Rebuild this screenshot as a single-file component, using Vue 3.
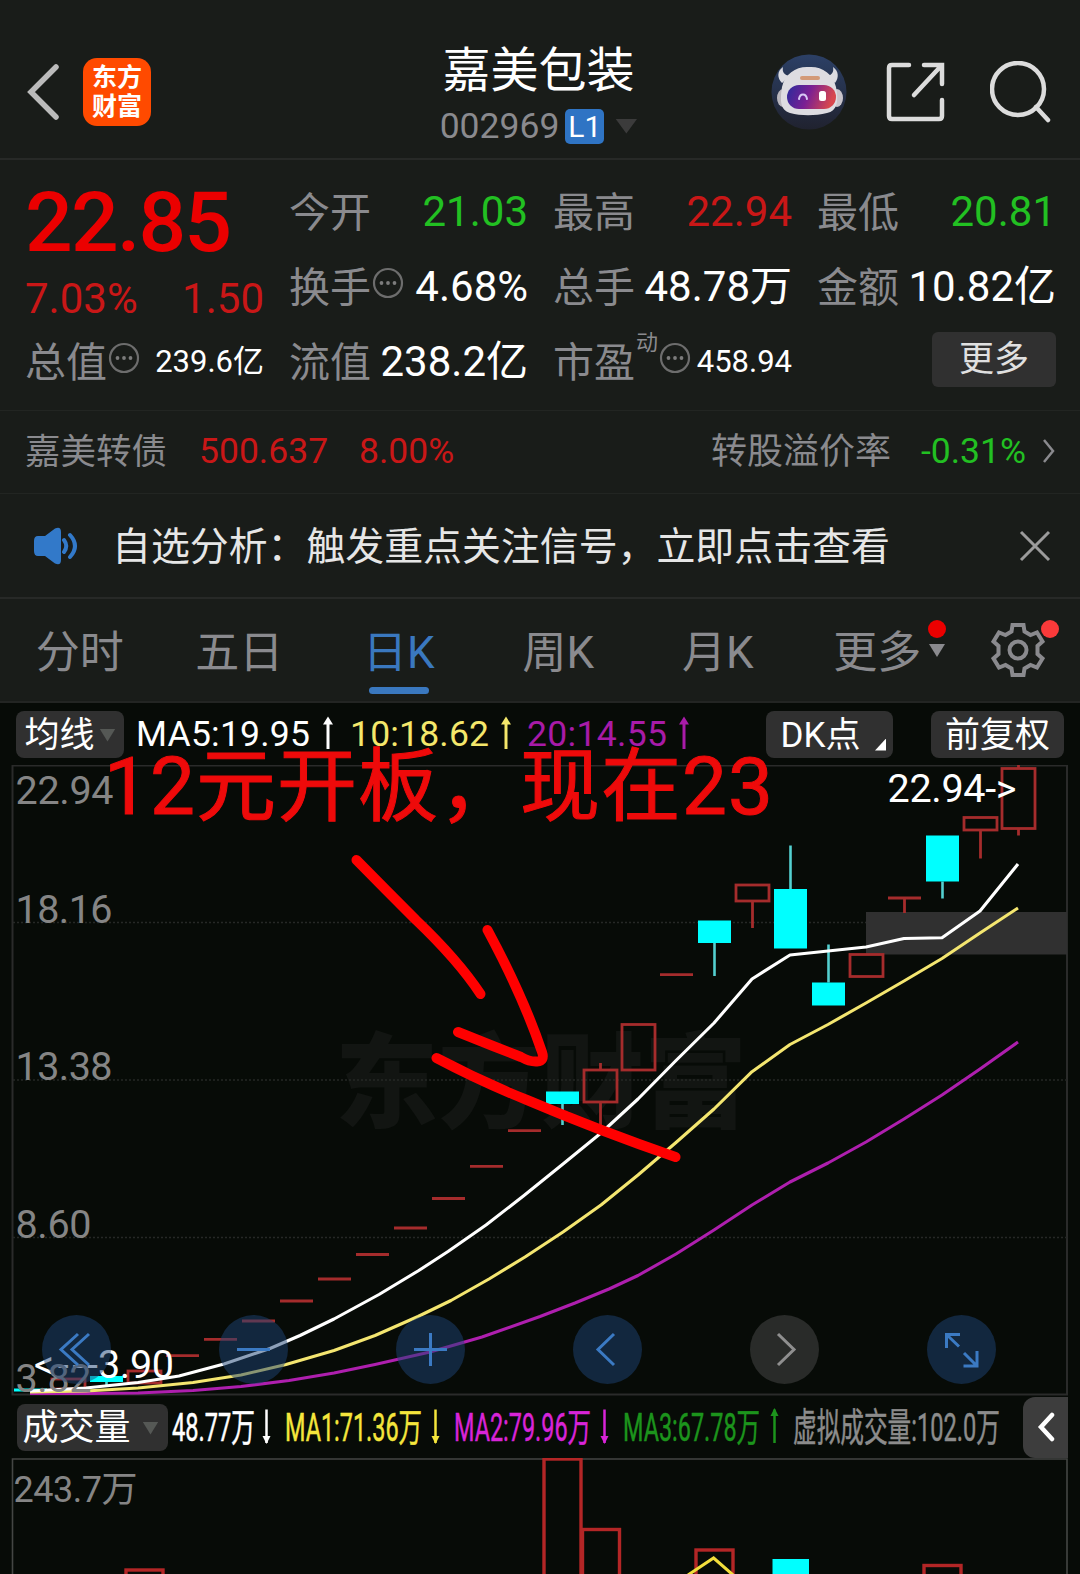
<template>
  <div class="page">
    <header class="header">
      <div class="header-left">
        <svg class="icon-back" viewBox="0 0 36 60">
          <path d="M31 5 L6 30 L31 55" />
        </svg>
        <div class="brand"><span>东方</span><span>财富</span></div>
      </div>
      <div class="header-title">
        <div class="stock-name">嘉美包装</div>
        <div class="stock-code">
          <span class="code">002969</span>
          <span class="level">L1</span>
          <i class="tri tri-dark"></i>
        </div>
      </div>
      <div class="header-right">
        <svg class="icon-robot" viewBox="0 0 76 76">
          <defs>
            <linearGradient id="robotBg" x1="0" y1="0" x2="0" y2="1">
              <stop offset="0" stop-color="#2c4066" />
              <stop offset="1" stop-color="#20222f" />
            </linearGradient>
            <linearGradient id="visor" x1="0" y1="0" x2="1" y2="0.2">
              <stop offset="0" stop-color="#2a2c9c" />
              <stop offset="0.5" stop-color="#7a1f93" />
              <stop offset="1" stop-color="#d8474e" />
            </linearGradient>
          </defs>
          <circle cx="38" cy="38" r="37.5" fill="url(#robotBg)" />
          <path d="M12 13 C6 17 6 24 11 29 L19 22 C13 21 11 18 12 13 Z" fill="#dcdce2" />
          <path d="M62 13 C68 17 68 24 64 29 L56 22 C61 21 63 18 62 13 Z" fill="#dcdce2" />
          <ellipse cx="12" cy="44" rx="6" ry="9" fill="#b9b6bd" />
          <ellipse cx="66" cy="44" rx="6" ry="9" fill="#c9c4cb" />
          <path d="M38 13 C50 12 62 19 65 33 C68 48 66 57 56 59 C44 62 30 62 19 59 C9 56 9 46 11 33 C14 19 26 12 38 13 Z" fill="#dddce1" />
          <rect x="29" y="22" width="20" height="4" rx="2" fill="#d39a78" />
          <rect x="16" y="31" width="49" height="24" rx="12" fill="url(#visor)" />
          <path d="M28 45 C29 39 35 39 36 45" fill="none" stroke="#d9c8f5" stroke-width="2" stroke-linecap="round" />
          <rect x="48" y="37" width="7" height="10" rx="2.5" fill="#fff" />
        </svg>
        <svg class="icon-share" viewBox="0 0 60 60">
          <path d="M23 3 H6 Q3 3 3 6 V54 Q3 57 6 57 H53 Q56 57 56 54 V38" />
          <path d="M38 3 H56 V22 M55 4 L28 33" />
        </svg>
        <svg class="icon-search" viewBox="0 0 62 62">
          <circle cx="28" cy="28" r="26" />
          <path d="M46 46 L58 59" />
        </svg>
      </div>
    </header>

    <section class="quote">
      <div class="price-box">
        <div class="price">22.85</div>
        <div class="change"><span>7.03%</span><span>1.50</span></div>
      </div>
      <div v-for="item in stats" :key="item.label" class="stat">
        <span class="stat-label">{{ item.label }}</span>
        <sup v-if="item.sup" class="stat-sup">{{ item.sup }}</sup>
        <svg v-if="item.tip" class="icon-tip" viewBox="0 0 32 32">
          <circle cx="16" cy="16" r="14" />
          <circle v-for="x in [9.5, 16, 22.5]" :key="x" class="dot" :cx="x" cy="16" r="1.9" />
        </svg>
        <span class="stat-value" :class="[item.color, { small: item.small }]">{{ item.value }}</span>
      </div>
      <div class="more-cell"><button class="more-btn">更多</button></div>
    </section>

    <section class="bond">
      <span class="bond-name">嘉美转债</span>
      <span class="bond-price">500.637</span>
      <span class="bond-rate">8.00%</span>
      <span class="bond-premium">转股溢价率</span>
      <span class="bond-premium-value">-0.31%</span>
      <svg class="icon-next" viewBox="0 0 14 26"><path d="M2 2 L11 13 L2 24" /></svg>
    </section>

    <section class="notice">
      <svg class="icon-speaker" viewBox="0 0 46 38">
        <path class="body" d="M5 9 H12 L22 1.5 Q28 -1 28 5 V33 Q28 39 22 36.5 L12 29 H5 Q1 29 1 24 V14 Q1 9 5 9 Z" />
        <path class="wave" d="M31 13 Q35.5 19 31 25 M37 8 Q47 19 37 30" />
      </svg>
      <span class="notice-text">自选分析：触发重点关注信号，立即点击查看</span>
      <svg class="icon-close" viewBox="0 0 32 32"><path d="M2 2 L30 30 M30 2 L2 30" /></svg>
    </section>

    <nav class="tabs">
      <div v-for="tab in tabs" :key="tab" class="tab" :class="{ active: tab === activeTab }" @click="activeTab = tab">
        {{ tab }}
      </div>
      <div class="tab">
        更多
        <i class="red-dot"></i>
        <i class="tri tri-tab"></i>
      </div>
      <div class="tab-setting">
        <svg viewBox="0 0 54 54">
          <path d="M21.5 2 H32.5 L33.5 8.5 L39.5 12 L46 9.5 L51.5 18.5 L46.5 23 V31 L51.5 35.5 L46 44.5 L39.5 42 L33.5 45.5 L32.5 52 H21.5 L20.5 45.5 L14.5 42 L8 44.5 L2.5 35.5 L7.5 31 V23 L2.5 18.5 L8 9.5 L14.5 12 L20.5 8.5 Z" />
          <circle cx="27" cy="27" r="8.5" />
        </svg>
        <i class="red-dot light"></i>
      </div>
    </nav>

    <section class="chart">
      <div class="ma-bar">
        <button class="chip chip-ma">均线<i class="tri tri-chip"></i></button>
        <svg class="ma-values" viewBox="130 703 570 62">
          <g v-for="ma in maList" :key="ma.text" :fill="ma.color" :stroke="ma.color">
            <text :x="ma.x" y="746" :textLength="ma.width" stroke="none">{{ ma.text }}</text>
            <path :d="`M${ma.arrow} 749 V722`" stroke-width="3" />
            <path :d="`M${ma.arrow} 716.5 l5 8 h-10 Z`" stroke="none" />
          </g>
        </svg>
        <button class="chip chip-dk">DK点<i class="corner"></i></button>
        <button class="chip chip-fq">前复权</button>
      </div>

      <div class="kline">
        <svg class="kline-svg" viewBox="0 765 1080 631">
          <text class="watermark" x="335" y="1120" textLength="412">东方财富</text>
          <g class="frame">
            <path d="M12.5 1394.5 V765.5 H1067 V1394.5 Z" />
            <path v-for="y in [922.5, 1080, 1237.5]" :key="y" class="dotted" :d="`M13 ${y} H1067`" />
          </g>
          <rect x="866" y="912" width="201" height="42.5" fill="#303030" />
          <g v-for="c in candles" :key="c.x" :class="c.up ? 'up' : 'down'">
            <path v-if="c.high < c.top" :d="`M${c.x} ${c.high} V${c.top}`" />
            <path v-if="c.low > c.bottom" :d="`M${c.x} ${c.bottom} V${c.low}`" />
            <path v-if="c.top === c.bottom" :d="`M${c.x - 16.5} ${c.top} h33`" />
            <rect v-else :x="c.x - 16.5" :y="c.top" width="33" :height="c.bottom - c.top" />
          </g>
          <polyline v-for="line in maLines" :key="line.color" class="ma-line" :points="line.points" :stroke="line.color" />
          <g class="mark">
            <text x="887.5" y="801.5" textLength="129">22.94-&gt;</text>
            <text x="34" y="1378" textLength="64">&lt;---</text>
            <text x="98" y="1378" textLength="76">3.90</text>
          </g>
          <g class="axis">
            <text v-for="a in axis" :key="a.text" x="15.5" :y="a.y" :textLength="a.width">{{ a.text }}</text>
          </g>
        </svg>
        <div class="tools">
          <span v-for="tool in tools" :key="tool.name" class="tool" :class="{ disabled: tool.disabled }">
            <svg viewBox="0 0 69 69"><path :d="tool.path" /></svg>
          </span>
        </div>
      </div>

      <div class="vol-bar">
        <button class="chip chip-vol">成交量<i class="tri tri-chip"></i></button>
        <svg class="vol-values" viewBox="168 1396 840 62">
          <g v-for="v in volList" :key="v.text" :fill="v.color" :stroke="v.color">
            <text :x="v.x" y="1440.5" :textLength="v.width" lengthAdjust="spacingAndGlyphs" stroke-width="0.5">{{ v.text }}</text>
            <template v-if="v.arrow">
              <path :d="`M${v.arrow} 1409.5 V1443`" stroke-width="2.5" />
              <path v-if="v.rise" :d="`M${v.arrow} 1408 l4 8 h-8 Z`" stroke="none" />
              <path v-else :d="`M${v.arrow} 1444 l4 -8 h-8 Z`" stroke="none" />
            </template>
          </g>
        </svg>
        <div class="drawer">
          <svg viewBox="0 0 18 30"><path d="M15 3 L4 15 L15 27" /></svg>
        </div>
      </div>

      <svg class="volume-svg" viewBox="0 1458 1080 116">
        <path class="vol-frame" d="M12.5 1580 V1459 H1067 V1580" />
        <text x="13.5" y="1501.5" textLength="124">243.7万</text>
        <g v-for="b in volumes" :key="b.x" :class="b.up ? 'up' : 'down'">
          <rect :x="b.x" :y="b.y" :width="b.w" height="140" />
        </g>
        <polyline points="688,1575 713.6,1558 733,1575" fill="none" stroke="#f2de3c" stroke-width="3" />
      </svg>

      <svg class="annotation" viewBox="0 703 1080 871">
        <text x="104" y="813.5" textLength="669">12元开板，现在23</text>
        <path d="M356.5 860 Q385 889 416 920 Q458 960 480.5 994" />
        <path d="M487.5 930 Q523 996 542 1052 Q545 1061 537 1061.5 Q530 1062 521 1057 L493 1046 L458 1032" />
        <path d="M436.5 1058 Q480 1081 527 1100 Q600 1131 675.5 1157" />
      </svg>
    </section>
  </div>
</template>

<script setup>
import { ref } from 'vue';

const activeTab = ref('日K');
const tabs = ['分时', '五日', '日K', '周K', '月K'];

const stats = [
  { label: '今开', value: '21.03', color: 'green' },
  { label: '最高', value: '22.94', color: 'red' },
  { label: '最低', value: '20.81', color: 'green' },
  { label: '换手', value: '4.68%', tip: true },
  { label: '总手', value: '48.78万' },
  { label: '金额', value: '10.82亿' },
  { label: '总值', value: '239.6亿', tip: true, small: true },
  { label: '流值', value: '238.2亿' },
  { label: '市盈', value: '458.94', sup: '动', tip: true, small: true }
];

const maList = [
  { text: 'MA5:19.95', x: 136, width: 174, arrow: 328, color: '#ffffff' },
  { text: '10:18.62', x: 350, width: 139, arrow: 506, color: '#f4e76b' },
  { text: '20:14.55', x: 527, width: 140, arrow: 684, color: '#a81ba8' }
];

const axis = [
  { text: '22.94', y: 803.5, width: 98 },
  { text: '18.16', y: 922.5, width: 97 },
  { text: '13.38', y: 1080, width: 97 },
  { text: '8.60', y: 1237.5, width: 76 },
  { text: '3.82', y: 1392, width: 76 }
];

const flat = (x, y, low = y) => ({ x, top: y, bottom: y, high: y, low, up: true });
const up = (x, top, bottom, high = top, low = bottom) => ({ x, top, bottom, high, low, up: true });
const down = (x, top, bottom, high = top, low = bottom) => ({ x, top, bottom, high, low, up: false });

const candles = [
  down(30.5, 1388.5, 1391.5),
  up(68.5, 1379, 1389),
  down(106.5, 1376, 1382, 1376, 1385),
  up(144.5, 1371, 1383),
  flat(182.5, 1355.7),
  flat(220.5, 1339.3),
  flat(258.5, 1321),
  flat(296.5, 1301),
  flat(334.5, 1279),
  flat(372.5, 1254.5),
  flat(410.5, 1228),
  flat(448.5, 1198.5),
  flat(486.5, 1166.3),
  flat(524.5, 1130.7),
  down(562.5, 1091.5, 1104, 1091.5, 1125),
  up(600.5, 1070, 1102, 1063, 1128),
  up(638.5, 1024.5, 1070),
  flat(676.5, 974.7),
  down(714.5, 920.5, 943, 920.5, 976),
  up(752.5, 885, 901, 885, 928),
  down(790.5, 889, 948.5, 845.5, 948.5),
  down(828.5, 982.5, 1005.5, 944.5, 1005.5),
  up(866.5, 954.5, 976.5),
  flat(904.5, 898, 913),
  down(942.5, 835.5, 881.5, 835.5, 898.5),
  up(980.5, 817.5, 830, 817.5, 858.5),
  up(1018.5, 768.5, 828.5, 765, 835.5)
];

const maLines = [
  {
    color: '#ae1fae',
    points: '30,1393.5 86,1393.5 138,1393 193,1390.5 241,1386.5 289,1380.5 334,1373 375,1364.5 430,1352 482,1337 540,1316.5 575,1303 609,1289 638,1275.5 676,1254 714,1230 752,1205 790,1182 828,1163 866,1142 904,1119 942,1095 980,1069 1018,1042'
  },
  {
    color: '#f4e670',
    points: '30,1392 86,1391 138,1388 193,1382.5 241,1375 286,1364.5 334,1350.5 375,1335.5 418,1316.5 451,1300.5 489,1279 525,1257 563,1232 601,1205 638,1175 676,1142.5 714,1109 752,1071.7 790,1044.5 828,1024.5 866,1003 904,981 942,958.5 980,933 1018,908'
  },
  {
    color: '#ffffff',
    points: '30,1391 86,1388 138,1382.5 179,1376 224,1364 270,1348.5 300,1335.5 334,1319 379,1294.5 418,1271 448,1251.5 486,1225 524,1195.5 563,1164 601,1133 638,1099 676,1060.5 714,1023 752,979 790,955 828,951 866,947 904,938.5 942,937.7 980,911 1018,864'
  }
];

const tools = [
  { name: 'first', path: 'M36 19 L19 34.5 L36 50 M47 19 L30 34.5 L47 50' },
  { name: 'minus', path: 'M18 34.5 H51' },
  { name: 'plus', path: 'M18 34.5 H51 M34.5 18 V51' },
  { name: 'prev', path: 'M41 19 L25 34.5 L41 50' },
  { name: 'next', path: 'M28 19 L44 34.5 L28 50', disabled: true },
  { name: 'full', path: 'M33 19.5 H19.5 V33 M20 20 L32 31.5 M36.5 51 H50 V36 M50 51 L37 38' }
];

const volList = [
  { text: '48.77万', x: 172, width: 83, arrow: 266.5, color: '#ffffff' },
  { text: 'MA1:71.36万', x: 285, width: 137, arrow: 435.5, color: '#f5e63c' },
  { text: 'MA2:79.96万', x: 454, width: 137, arrow: 604.5, color: '#d824d8' },
  { text: 'MA3:67.78万', x: 623, width: 137, arrow: 774.5, color: '#1c941c', rise: true },
  { text: '虚拟成交量:102.0万', x: 793, width: 207, color: '#8c8c8c' }
];

const volumes = [
  { x: 126, y: 1570, w: 37, up: true },
  { x: 544, y: 1459, w: 37, up: true },
  { x: 582.5, y: 1529.5, w: 37, up: true },
  { x: 696, y: 1550, w: 37, up: true },
  { x: 772.5, y: 1559, w: 36.5, up: false },
  { x: 924, y: 1565.5, w: 37, up: true }
];
</script>

<style>
body {
  background: #191c19;
}
</style>

<style scoped>
.page {
  width: 1080px;
  height: 1574px;
  overflow: hidden;
  background: #191c19;
  color: #8a8a8e;
  font-family: Roboto, "Noto Sans CJK SC", sans-serif;
  display: flex;
  flex-direction: column;
}
.page * {
  box-sizing: border-box;
}
svg {
  display: block;
  fill: none;
}
button {
  border: 0;
  padding: 0;
  font-family: inherit;
  color: #fff;
  background: #303030;
}
.tri {
  display: block;
  width: 16px;
  height: 13px;
  background: #555855;
  clip-path: polygon(0 0, 100% 0, 50% 100%);
}

/* header */
.header {
  height: 160px;
  padding: 26px 28px 0 25px;
  border-bottom: 2px solid #272927;
  display: grid;
  grid-template-columns: 1fr auto 1fr;
  align-items: center;
}
.header-left,
.header-right {
  display: flex;
  align-items: center;
}
.header-right {
  justify-content: flex-end;
}
.icon-back {
  width: 36px;
  height: 60px;
  stroke: #bbb;
  stroke-width: 5.5;
  stroke-linecap: round;
}
.brand {
  width: 68px;
  height: 68px;
  margin-left: 22px;
  border-radius: 14px;
  background: #ff4a00;
  color: #fff;
  font-size: 25px;
  font-weight: 700;
  line-height: 29px;
  display: flex;
  flex-direction: column;
  align-items: center;
  justify-content: center;
}
.header-title {
  padding-top: 8px;
}
.stock-name {
  color: #fff;
  font-size: 48px;
  line-height: 56px;
  text-align: center;
}
.stock-code {
  display: flex;
  align-items: center;
  height: 50px;
  padding-top: 4px;
}
.code {
  font-size: 35.5px;
}
.level {
  width: 39px;
  height: 35px;
  margin-left: 6px;
  border-radius: 5px;
  background: #2f74c4;
  color: #fff;
  font-size: 30px;
  line-height: 35px;
  text-align: center;
}
.tri-dark {
  width: 22px;
  height: 15px;
  margin-left: 11px;
  background: #3b3b3b;
}
.icon-robot {
  width: 76px;
  height: 76px;
}
.icon-share {
  width: 60px;
  height: 60px;
  margin-left: 39px;
  stroke: #dcdcdc;
  stroke-width: 4.5;
  stroke-linecap: round;
}
.icon-search {
  width: 62px;
  height: 62px;
  margin-left: 44px;
  stroke: #dcdcdc;
  stroke-width: 4.5;
  stroke-linecap: round;
}

/* quote */
.quote {
  height: 251px;
  padding: 14px 24px 0 25px;
  border-bottom: 1px solid #222522;
  display: grid;
  grid-template-columns: repeat(4, 239px);
  grid-template-rows: repeat(3, 75px);
  column-gap: 25px;
}
.price-box {
  grid-row: span 2;
}
.price {
  height: 100px;
  color: #eb0000;
  font-size: 84px;
  font-weight: 500;
  line-height: 98px;
  letter-spacing: -1.8px;
}
.change {
  display: flex;
  justify-content: space-between;
  color: #c91717;
  font-size: 42px;
  line-height: 50px;
}
.stat {
  display: flex;
  align-items: center;
  height: 75px;
  line-height: 48px;
}
.stat-label {
  padding-top: 2px;
  font-size: 41px;
  white-space: nowrap;
}
.stat-value {
  margin-left: auto;
  color: #fff;
  font-size: 42px;
  white-space: nowrap;
}
.stat-value.green {
  color: #22c022;
}
.stat-value.red {
  color: #c91717;
}
.stat-value.small {
  font-size: 31px;
}
.stat-sup {
  align-self: flex-start;
  margin-left: 1px;
  font-size: 22px;
  line-height: 38px;
}
.icon-tip {
  width: 32px;
  height: 32px;
  margin: -7px 0 0 1px;
  stroke: #6d6d6d;
  stroke-width: 2.2;
}
.icon-tip .dot {
  fill: #7c7c7c;
  stroke: none;
}
.more-cell {
  display: flex;
  justify-content: flex-end;
  align-items: center;
  padding-bottom: 5px;
}
.more-btn {
  width: 124px;
  height: 55px;
  border-radius: 6px;
  color: #e0e0e0;
  font-size: 35px;
  line-height: 55px;
}

/* bond */
.bond {
  height: 83px;
  padding: 0 24px 3px 25px;
  border-bottom: 1px solid #222522;
  display: flex;
  align-items: center;
  font-size: 35.5px;
  line-height: 48px;
  white-space: nowrap;
}
.bond-name,
.bond-premium {
  padding-top: 2px;
}
.bond-price {
  width: 129px;
  margin-left: 32px;
  color: #c91717;
}
.bond-rate {
  margin-left: 31px;
  color: #c91717;
}
.bond-premium {
  margin-left: auto;
  font-size: 36px;
}
.bond-premium-value {
  margin-left: 30px;
  color: #22c022;
}
.icon-next {
  width: 14px;
  height: 26px;
  margin-left: 16px;
  stroke: #8a8a8e;
  stroke-width: 2.5;
}

/* notice */
.notice {
  height: 105px;
  padding: 0 29px 0 33px;
  border-bottom: 2px solid #272927;
  display: flex;
  align-items: center;
}
.icon-speaker {
  width: 46px;
  height: 38px;
}
.icon-speaker .body {
  fill: #3279c9;
}
.icon-speaker .wave {
  stroke: #3279c9;
  stroke-width: 4;
  stroke-linecap: round;
}
.notice-text {
  margin-left: 33px;
  padding-top: 3px;
  color: #e6e6e6;
  font-size: 38.9px;
  line-height: 48px;
  white-space: nowrap;
}
.icon-close {
  width: 32px;
  height: 32px;
  margin-left: auto;
  stroke: #9b9b9b;
  stroke-width: 3;
}

/* tabs */
.tabs {
  height: 104px;
  padding-right: 18px;
  border-bottom: 2px solid #232523;
  display: flex;
  align-items: center;
  font-size: 44px;
}
.tab {
  position: relative;
  width: 159.5px;
  height: 102px;
  line-height: 109px;
  text-align: center;
  white-space: nowrap;
}
.tab.active {
  color: #3a78bf;
}
.tab.active::after {
  content: '';
  position: absolute;
  left: 50px;
  bottom: 7px;
  width: 60px;
  height: 7px;
  border-radius: 4px;
  background: #3a78bf;
}
.tri-tab {
  position: absolute;
  right: 12px;
  top: 45px;
  background: #8a8a8e;
}
.red-dot {
  position: absolute;
  right: 11px;
  top: 21px;
  width: 18px;
  height: 18px;
  border-radius: 50%;
  background: #ec0000;
}
.red-dot.light {
  right: 3px;
  background: #fa3a3a;
}
.tab-setting {
  position: relative;
  height: 102px;
  width: 71px;
  margin-left: auto;
  display: flex;
  align-items: center;
}
.tab-setting svg {
  width: 54px;
  height: 54px;
  stroke: #8a8a8e;
  stroke-width: 4;
}

/* chart */
.chart {
  position: relative;
  height: 871px;
  background: #070b07;
}
.chip {
  height: 47px;
  padding-top: 2px;
  border-radius: 8px;
  font-size: 35px;
  line-height: 45px;
  display: flex;
  align-items: center;
  justify-content: center;
  white-space: nowrap;
}
.ma-bar {
  height: 62px;
  padding: 0 16px;
  display: flex;
  align-items: center;
}
.chip-ma {
  width: 108px;
  gap: 5px;
}
.ma-values {
  width: 570px;
  height: 62px;
  margin-left: 6px;
  font-size: 35.5px;
}
.chip-dk {
  position: relative;
  width: 127px;
  margin-left: 66px;
  padding-right: 18px;
}
.corner {
  position: absolute;
  right: 7px;
  bottom: 7px;
  width: 11px;
  height: 12px;
  background: #fff;
  clip-path: polygon(100% 0, 100% 100%, 0 100%);
}
.chip-fq {
  width: 133px;
  margin-left: 38px;
}
.kline {
  position: relative;
  height: 631px;
}
.kline-svg {
  width: 1080px;
  height: 631px;
}
.watermark {
  fill: #121512;
  font-size: 103px;
  font-weight: 900;
}
.frame path {
  stroke: #2a2b2a;
  stroke-width: 2;
}
.frame .dotted {
  stroke: #262826;
  stroke-width: 1.5;
  stroke-dasharray: 2 2;
}
.up path,
.up rect {
  stroke: #a52c2c;
  stroke-width: 2.8;
}
.down path {
  stroke: #54d0d0;
  stroke-width: 2.6;
}
.down rect {
  fill: #00ffff;
}
.ma-line {
  stroke-width: 3.1;
  stroke-linejoin: round;
}
.mark {
  fill: #fff;
  font-size: 39.5px;
}
.axis {
  fill: #858585;
  font-size: 39.5px;
}
.tools {
  position: absolute;
  left: 42px;
  right: 84px;
  bottom: 12px;
  display: flex;
  justify-content: space-between;
}
.tool {
  width: 69px;
  height: 69px;
  border-radius: 50%;
  background: rgba(29, 67, 118, 0.5);
}
.tool svg {
  stroke: #3b7ac3;
  stroke-width: 3;
}
.tool.disabled {
  background: #292b29;
}
.tool.disabled svg {
  stroke: #8f8f8f;
}
.vol-bar {
  height: 62px;
  padding: 0 12px 0 17px;
  display: flex;
  align-items: center;
}
.chip-vol {
  width: 151px;
  padding-right: 4px;
  font-size: 36px;
  gap: 12px;
}
.vol-values {
  width: 840px;
  height: 62px;
  font-size: 39px;
}
.drawer {
  width: 45px;
  height: 61px;
  margin-left: auto;
  border-radius: 12px 0 0 12px;
  background: #3d3d3d;
  display: flex;
  align-items: center;
  justify-content: center;
}
.drawer svg {
  width: 18px;
  height: 30px;
  stroke: #fff;
  stroke-width: 4.5;
  stroke-linecap: round;
}
.volume-svg {
  width: 1080px;
  height: 116px;
  font-size: 36px;
}
.volume-svg text {
  fill: #858585;
}
.volume-svg .up rect {
  stroke: #b32626;
  stroke-width: 3.4;
}
.vol-frame {
  stroke: #444644;
  stroke-width: 1.6;
}
.annotation {
  position: absolute;
  left: 0;
  top: 0;
  width: 1080px;
  height: 871px;
  pointer-events: none;
}
.annotation text {
  fill: #ee0a0a;
  stroke: #ee0a0a;
  stroke-width: 1;
  font-size: 80px;
}
.annotation path {
  stroke: #ff0000;
  stroke-width: 10;
  stroke-linecap: round;
  stroke-linejoin: round;
}
</style>
